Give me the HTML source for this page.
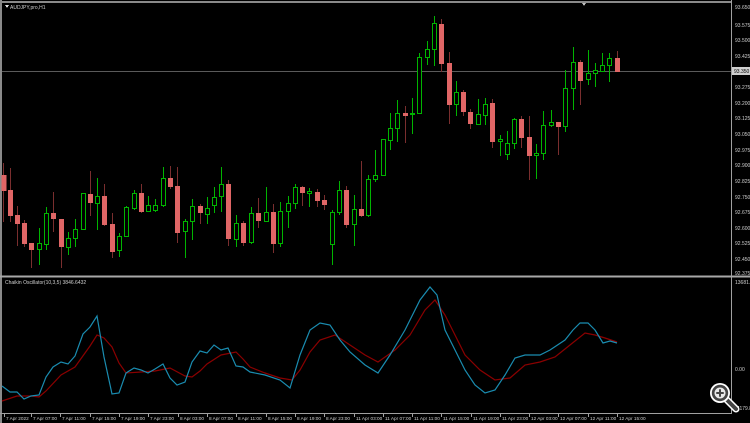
<!DOCTYPE html>
<html><head><meta charset="utf-8"><style>
html,body{margin:0;padding:0;background:#000;width:750px;height:423px;overflow:hidden}
svg{display:block}
text{font-family:"Liberation Sans",sans-serif;font-size:5px;fill:#cfcfcf}
.t text{font-size:4.7px}
.b line{stroke:#00b400;stroke-width:1}.b rect{stroke:#00b400;stroke-width:1;fill:#000}
.r line{stroke:#7a2e2e;stroke-width:1}.r rect{fill:#e06666;stroke:#e06666;stroke-width:1}
</style></head><body>
<svg width="750" height="423" viewBox="0 0 750 423" shape-rendering="crispEdges">
<rect x="0" y="0" width="750" height="423" fill="#000"/>
<line x1="0" y1="2" x2="731" y2="2" stroke="#8a8a8a" stroke-width="2"/>
<line x1="1" y1="0" x2="1" y2="423" stroke="#8a8a8a" stroke-width="2"/>
<line x1="731.5" y1="0" x2="731.5" y2="414" stroke="#a0a0a0"/>
<line x1="0" y1="276.5" x2="750" y2="276.5" stroke="#a8a8a8" stroke-width="2"/>
<line x1="0" y1="413.5" x2="731" y2="413.5" stroke="#a0a0a0"/>
<polygon points="5,5 9,5 7,8" fill="#ddd"/>
<text x="10" y="9">AUDJPY,pro,H1</text>
<polygon points="582,3 586,3 584,6" fill="#bbb"/>
<line x1="2" y1="71.5" x2="731" y2="71.5" stroke="#5a5a5a"/>
<g id="c">
<g class="r"><line x1="3.5" y1="163" x2="3.5" y2="222"/><rect x="2" y="175.5" width="4" height="15"/></g>
<g class="r"><line x1="10.5" y1="168" x2="10.5" y2="222"/><rect x="8.5" y="190.5" width="4" height="25"/></g>
<g class="r"><line x1="17.5" y1="206" x2="17.5" y2="246"/><rect x="15.5" y="215.5" width="4" height="8"/></g>
<g class="r"><line x1="24.5" y1="220" x2="24.5" y2="247"/><rect x="22.5" y="223.5" width="4" height="20"/></g>
<g class="r"><line x1="31.5" y1="244" x2="31.5" y2="268"/><rect x="29.5" y="243.5" width="4" height="6"/></g>
<g class="b"><line x1="39.5" y1="228" x2="39.5" y2="265"/><rect x="37.5" y="243.5" width="4" height="6"/></g>
<g class="b"><line x1="46.5" y1="207" x2="46.5" y2="250"/><rect x="44.5" y="213.5" width="4" height="31"/></g>
<g class="r"><line x1="53.5" y1="192" x2="53.5" y2="232"/><rect x="51.5" y="213.5" width="4" height="5"/></g>
<g class="r"><line x1="61.5" y1="219" x2="61.5" y2="268"/><rect x="59.5" y="219.5" width="4" height="27"/></g>
<g class="b"><line x1="68.5" y1="232" x2="68.5" y2="255"/><rect x="66.5" y="238.5" width="4" height="9"/></g>
<g class="b"><line x1="75.5" y1="219" x2="75.5" y2="247"/><rect x="73.5" y="229.5" width="4" height="9"/></g>
<g class="b"><line x1="83.5" y1="193" x2="83.5" y2="230"/><rect x="81.5" y="193.5" width="4" height="36"/></g>
<g class="r"><line x1="90.5" y1="171" x2="90.5" y2="216"/><rect x="88.5" y="194.5" width="4" height="8"/></g>
<g class="b"><line x1="97.5" y1="178" x2="97.5" y2="230"/><rect x="95.5" y="196.5" width="4" height="7"/></g>
<g class="r"><line x1="104.5" y1="184" x2="104.5" y2="226"/><rect x="102.5" y="196.5" width="4" height="28"/></g>
<g class="r"><line x1="112.5" y1="213" x2="112.5" y2="258"/><rect x="110.5" y="224.5" width="4" height="27"/></g>
<g class="b"><line x1="119.5" y1="233" x2="119.5" y2="257"/><rect x="117.5" y="236.5" width="4" height="14"/></g>
<g class="b"><line x1="126.5" y1="206" x2="126.5" y2="237"/><rect x="124.5" y="207.5" width="4" height="29"/></g>
<g class="b"><line x1="134.5" y1="190" x2="134.5" y2="210"/><rect x="132.5" y="193.5" width="4" height="15"/></g>
<g class="r"><line x1="141.5" y1="184" x2="141.5" y2="213"/><rect x="139.5" y="193.5" width="4" height="18"/></g>
<g class="b"><line x1="148.5" y1="196" x2="148.5" y2="211"/><rect x="146.5" y="205.5" width="4" height="6"/></g>
<g class="b"><line x1="155.5" y1="199" x2="155.5" y2="212"/><rect x="153.5" y="205.5" width="4" height="5"/></g>
<g class="b"><line x1="163.5" y1="167" x2="163.5" y2="207"/><rect x="161.5" y="178.5" width="4" height="27"/></g>
<g class="r"><line x1="170.5" y1="166" x2="170.5" y2="189"/><rect x="168.5" y="178.5" width="4" height="8"/></g>
<g class="r"><line x1="177.5" y1="167" x2="177.5" y2="243"/><rect x="175.5" y="186.5" width="4" height="46"/></g>
<g class="b"><line x1="185.5" y1="219" x2="185.5" y2="258"/><rect x="183.5" y="221.5" width="4" height="10"/></g>
<g class="b"><line x1="192.5" y1="199" x2="192.5" y2="240"/><rect x="190.5" y="206.5" width="4" height="15"/></g>
<g class="r"><line x1="200.5" y1="204" x2="200.5" y2="224"/><rect x="198.5" y="206.5" width="4" height="6"/></g>
<g class="b"><line x1="207.5" y1="197" x2="207.5" y2="224"/><rect x="205.5" y="208.5" width="4" height="6"/></g>
<g class="b"><line x1="214.5" y1="187" x2="214.5" y2="213"/><rect x="212.5" y="197.5" width="4" height="8"/></g>
<g class="b"><line x1="221.5" y1="167" x2="221.5" y2="212"/><rect x="219.5" y="184.5" width="4" height="12"/></g>
<g class="r"><line x1="228.5" y1="180" x2="228.5" y2="246"/><rect x="226.5" y="184.5" width="4" height="54"/></g>
<g class="b"><line x1="236.5" y1="215" x2="236.5" y2="247"/><rect x="234.5" y="223.5" width="4" height="16"/></g>
<g class="r"><line x1="243.5" y1="221" x2="243.5" y2="246"/><rect x="241.5" y="223.5" width="4" height="19"/></g>
<g class="b"><line x1="251.5" y1="207" x2="251.5" y2="244"/><rect x="249.5" y="213.5" width="4" height="29"/></g>
<g class="r"><line x1="258.5" y1="198" x2="258.5" y2="228"/><rect x="256.5" y="213.5" width="4" height="7"/></g>
<g class="b"><line x1="266.5" y1="187" x2="266.5" y2="222"/><rect x="264.5" y="212.5" width="4" height="9"/></g>
<g class="r"><line x1="273.5" y1="204" x2="273.5" y2="253"/><rect x="271.5" y="212.5" width="4" height="31"/></g>
<g class="b"><line x1="280.5" y1="202" x2="280.5" y2="247"/><rect x="278.5" y="211.5" width="4" height="32"/></g>
<g class="b"><line x1="288.5" y1="196" x2="288.5" y2="228"/><rect x="286.5" y="203.5" width="4" height="8"/></g>
<g class="b"><line x1="295.5" y1="184" x2="295.5" y2="209"/><rect x="293.5" y="187.5" width="4" height="16"/></g>
<g class="r"><line x1="302.5" y1="186" x2="302.5" y2="206"/><rect x="300.5" y="187.5" width="4" height="5"/></g>
<g class="b"><line x1="309.5" y1="188" x2="309.5" y2="207"/><rect x="307.5" y="191.5" width="4" height="2"/></g>
<g class="r"><line x1="317.5" y1="189" x2="317.5" y2="207"/><rect x="315.5" y="192.5" width="4" height="8"/></g>
<g class="r"><line x1="324.5" y1="195" x2="324.5" y2="210"/><rect x="322.5" y="200.5" width="4" height="4"/></g>
<g class="b"><line x1="332.5" y1="210" x2="332.5" y2="265"/><rect x="330.5" y="212.5" width="4" height="32"/></g>
<g class="b"><line x1="339.5" y1="181" x2="339.5" y2="215"/><rect x="337.5" y="190.5" width="4" height="22"/></g>
<g class="r"><line x1="346.5" y1="186" x2="346.5" y2="228"/><rect x="344.5" y="190.5" width="4" height="34"/></g>
<g class="b"><line x1="354.5" y1="195" x2="354.5" y2="246"/><rect x="352.5" y="209.5" width="4" height="15"/></g>
<g class="r"><line x1="361.5" y1="161" x2="361.5" y2="217"/><rect x="359.5" y="209.5" width="4" height="6"/></g>
<g class="b"><line x1="368.5" y1="175" x2="368.5" y2="217"/><rect x="366.5" y="179.5" width="4" height="36"/></g>
<g class="b"><line x1="375.5" y1="150" x2="375.5" y2="182"/><rect x="373.5" y="175.5" width="4" height="4"/></g>
<g class="b"><line x1="383.5" y1="139" x2="383.5" y2="176"/><rect x="381.5" y="139.5" width="4" height="36"/></g>
<g class="b"><line x1="390.5" y1="113" x2="390.5" y2="150"/><rect x="388.5" y="128.5" width="4" height="12"/></g>
<g class="b"><line x1="397.5" y1="100" x2="397.5" y2="142"/><rect x="395.5" y="113.5" width="4" height="15"/></g>
<g class="r"><line x1="405.5" y1="106" x2="405.5" y2="143"/><rect x="403.5" y="113.5" width="4" height="2"/></g>
<g class="b"><line x1="412.5" y1="98" x2="412.5" y2="134"/><rect x="410.5" y="113.5" width="4" height="1"/></g>
<g class="b"><line x1="419.5" y1="53" x2="419.5" y2="114"/><rect x="417.5" y="57.5" width="4" height="56"/></g>
<g class="b"><line x1="427.5" y1="41" x2="427.5" y2="65"/><rect x="425.5" y="49.5" width="4" height="8"/></g>
<g class="b"><line x1="434.5" y1="16" x2="434.5" y2="66"/><rect x="432.5" y="23.5" width="4" height="26"/></g>
<g class="r"><line x1="441.5" y1="19" x2="441.5" y2="72"/><rect x="439.5" y="24.5" width="4" height="39"/></g>
<g class="r"><line x1="449.5" y1="52" x2="449.5" y2="124"/><rect x="447.5" y="63.5" width="4" height="41"/></g>
<g class="b"><line x1="456.5" y1="81" x2="456.5" y2="116"/><rect x="454.5" y="92.5" width="4" height="12"/></g>
<g class="r"><line x1="463.5" y1="90" x2="463.5" y2="116"/><rect x="461.5" y="92.5" width="4" height="19"/></g>
<g class="r"><line x1="470.5" y1="109" x2="470.5" y2="129"/><rect x="468.5" y="112.5" width="4" height="11"/></g>
<g class="b"><line x1="478.5" y1="99" x2="478.5" y2="125"/><rect x="476.5" y="114.5" width="4" height="10"/></g>
<g class="b"><line x1="485.5" y1="98" x2="485.5" y2="125"/><rect x="483.5" y="104.5" width="4" height="11"/></g>
<g class="r"><line x1="492.5" y1="99" x2="492.5" y2="148"/><rect x="490.5" y="103.5" width="4" height="38"/></g>
<g class="b"><line x1="500.5" y1="135" x2="500.5" y2="156"/><rect x="498.5" y="139.5" width="4" height="2"/></g>
<g class="b"><line x1="507.5" y1="131" x2="507.5" y2="160"/><rect x="505.5" y="143.5" width="4" height="11"/></g>
<g class="b"><line x1="514.5" y1="118" x2="514.5" y2="149"/><rect x="512.5" y="119.5" width="4" height="24"/></g>
<g class="r"><line x1="521.5" y1="116" x2="521.5" y2="148"/><rect x="519.5" y="119.5" width="4" height="18"/></g>
<g class="r"><line x1="529.5" y1="116" x2="529.5" y2="180"/><rect x="527.5" y="137.5" width="4" height="18"/></g>
<g class="b"><line x1="536.5" y1="144" x2="536.5" y2="179"/><rect x="534.5" y="153.5" width="4" height="2"/></g>
<g class="b"><line x1="543.5" y1="111" x2="543.5" y2="160"/><rect x="541.5" y="125.5" width="4" height="28"/></g>
<g class="b"><line x1="551.5" y1="110" x2="551.5" y2="127"/><rect x="549.5" y="122.5" width="4" height="3"/></g>
<g class="r"><line x1="558.5" y1="122" x2="558.5" y2="155"/><rect x="556.5" y="122.5" width="4" height="4"/></g>
<g class="b"><line x1="565.5" y1="70" x2="565.5" y2="132"/><rect x="563.5" y="88.5" width="4" height="38"/></g>
<g class="b"><line x1="573.5" y1="47" x2="573.5" y2="110"/><rect x="571.5" y="62.5" width="4" height="26"/></g>
<g class="r"><line x1="580.5" y1="60" x2="580.5" y2="105"/><rect x="578.5" y="62.5" width="4" height="18"/></g>
<g class="b"><line x1="588.5" y1="50" x2="588.5" y2="85"/><rect x="586.5" y="73.5" width="4" height="6"/></g>
<g class="b"><line x1="595.5" y1="63" x2="595.5" y2="87"/><rect x="593.5" y="70.5" width="4" height="3"/></g>
<g class="b"><line x1="602.5" y1="53" x2="602.5" y2="72"/><rect x="600.5" y="65.5" width="4" height="6"/></g>
<g class="b"><line x1="609.5" y1="53" x2="609.5" y2="82"/><rect x="607.5" y="58.5" width="4" height="7"/></g>
<g class="r"><line x1="617.5" y1="51" x2="617.5" y2="71"/><rect x="615.5" y="58.5" width="4" height="13"/></g>
</g>
<g>
<text x="735" y="9">93.650</text><text x="735" y="27">93.575</text><text x="735" y="42">93.500</text>
<text x="735" y="58">93.425</text><text x="735" y="89">93.275</text><text x="735" y="105">93.200</text>
<text x="735" y="120">93.125</text><text x="735" y="136">93.050</text><text x="735" y="152">92.975</text>
<text x="735" y="167">92.900</text><text x="735" y="183">92.825</text><text x="735" y="199">92.750</text>
<text x="735" y="214">92.675</text><text x="735" y="230">92.600</text><text x="735" y="245">92.525</text>
<text x="735" y="261">92.450</text><text x="735" y="275">92.375</text>
<rect x="732" y="67" width="18" height="8" fill="#cfcfcf"/>
<text x="734" y="73" style="fill:#000">93.350</text>
<text x="735" y="284">13681.00</text><text x="735" y="371">0.00</text><text x="735" y="410">-7179.85</text>
</g>
<text x="5" y="284">Chaikin Oscillator(10,3,5) 3846.6432</text>
<g shape-rendering="auto" fill="none" stroke-width="1.2">
<polyline stroke="#8b0000" points="2,401 17,396 31,396 39,397 46,391 61,375 75,367 90,346 97,335 104,338 112,347 119,363 126,373 141,372 155,371 170,368 185,376 192,377 200,371 207,364 221,355 236,352 243,359 250,367 265,373 280,378 292,380 300,370 310,352 320,340 335,335 350,345 365,355 378,362 395,350 410,335 425,310 435,300 445,315 455,335 465,355 480,370 495,380 510,378 525,365 540,362 555,357 570,345 585,333 595,335 605,338 617,342"/>
<polyline stroke="#1a8cb0" points="2,386 10,392 17,392 24,399 31,396 39,395 46,377 53,367 61,362 68,364 75,356 83,334 90,327 97,316 104,357 112,394 119,393 126,373 134,368 141,370 148,373 155,369 163,364 170,378 177,385 185,382 192,362 200,351 207,353 214,345 221,350 228,348 236,366 243,367 250,372 265,375 280,380 290,388 300,355 310,330 320,323 330,325 340,340 350,352 365,365 378,373 390,355 405,330 420,300 430,287 437,295 445,330 455,350 465,370 475,385 485,393 495,390 505,375 515,358 525,355 540,355 550,350 565,340 573,330 580,323 588,323 595,330 603,343 610,341 617,343"/>
</g>
<g class="t">
<text x="6" y="420">7 Apr 2022</text><text x="33" y="420">7 Apr 07:00</text><text x="62" y="420">7 Apr 11:00</text>
<text x="92" y="420">7 Apr 15:00</text><text x="121" y="420">7 Apr 19:00</text><text x="150" y="420">7 Apr 23:00</text>
<text x="180" y="420">8 Apr 03:00</text><text x="209" y="420">8 Apr 07:00</text><text x="238" y="420">8 Apr 11:00</text>
<text x="268" y="420">8 Apr 15:00</text><text x="297" y="420">8 Apr 19:00</text><text x="326" y="420">8 Apr 23:00</text>
<text x="356" y="420">11 Apr 03:00</text><text x="385" y="420">11 Apr 07:00</text><text x="414" y="420">11 Apr 11:00</text>
<text x="443" y="420">11 Apr 15:00</text><text x="473" y="420">11 Apr 19:00</text><text x="502" y="420">11 Apr 23:00</text>
<text x="531" y="420">12 Apr 03:00</text><text x="560" y="420">12 Apr 07:00</text><text x="590" y="420">12 Apr 11:00</text>
<text x="619" y="420">12 Apr 15:00</text>
</g>
<g stroke="#a0a0a0">
<line x1="4.5" y1="414" x2="4.5" y2="417"/><line x1="31.5" y1="414" x2="31.5" y2="417"/><line x1="60.5" y1="414" x2="60.5" y2="417"/><line x1="90.5" y1="414" x2="90.5" y2="417"/><line x1="119.5" y1="414" x2="119.5" y2="417"/><line x1="148.5" y1="414" x2="148.5" y2="417"/><line x1="178.5" y1="414" x2="178.5" y2="417"/><line x1="207.5" y1="414" x2="207.5" y2="417"/><line x1="236.5" y1="414" x2="236.5" y2="417"/><line x1="266.5" y1="414" x2="266.5" y2="417"/><line x1="295.5" y1="414" x2="295.5" y2="417"/><line x1="324.5" y1="414" x2="324.5" y2="417"/><line x1="354.5" y1="414" x2="354.5" y2="417"/><line x1="383.5" y1="414" x2="383.5" y2="417"/><line x1="412.5" y1="414" x2="412.5" y2="417"/><line x1="441.5" y1="414" x2="441.5" y2="417"/><line x1="471.5" y1="414" x2="471.5" y2="417"/><line x1="500.5" y1="414" x2="500.5" y2="417"/><line x1="529.5" y1="414" x2="529.5" y2="417"/><line x1="558.5" y1="414" x2="558.5" y2="417"/><line x1="588.5" y1="414" x2="588.5" y2="417"/><line x1="617.5" y1="414" x2="617.5" y2="417"/>
</g>
<g shape-rendering="auto" stroke-linecap="round">
<line x1="727" y1="400" x2="736" y2="409" stroke="#fff" stroke-width="7"/>
<line x1="727" y1="400" x2="736" y2="409" stroke="#444" stroke-width="4"/>
<circle cx="720" cy="393" r="10" fill="#fff"/>
<circle cx="720" cy="393" r="8.2" fill="#444"/>
<circle cx="720" cy="393" r="5.5" fill="#e8e8e8"/>
<line x1="720" y1="390" x2="720" y2="396" stroke="#444" stroke-width="2"/>
<line x1="717" y1="393" x2="723" y2="393" stroke="#444" stroke-width="2"/>
</g>
</svg>
</body></html>
